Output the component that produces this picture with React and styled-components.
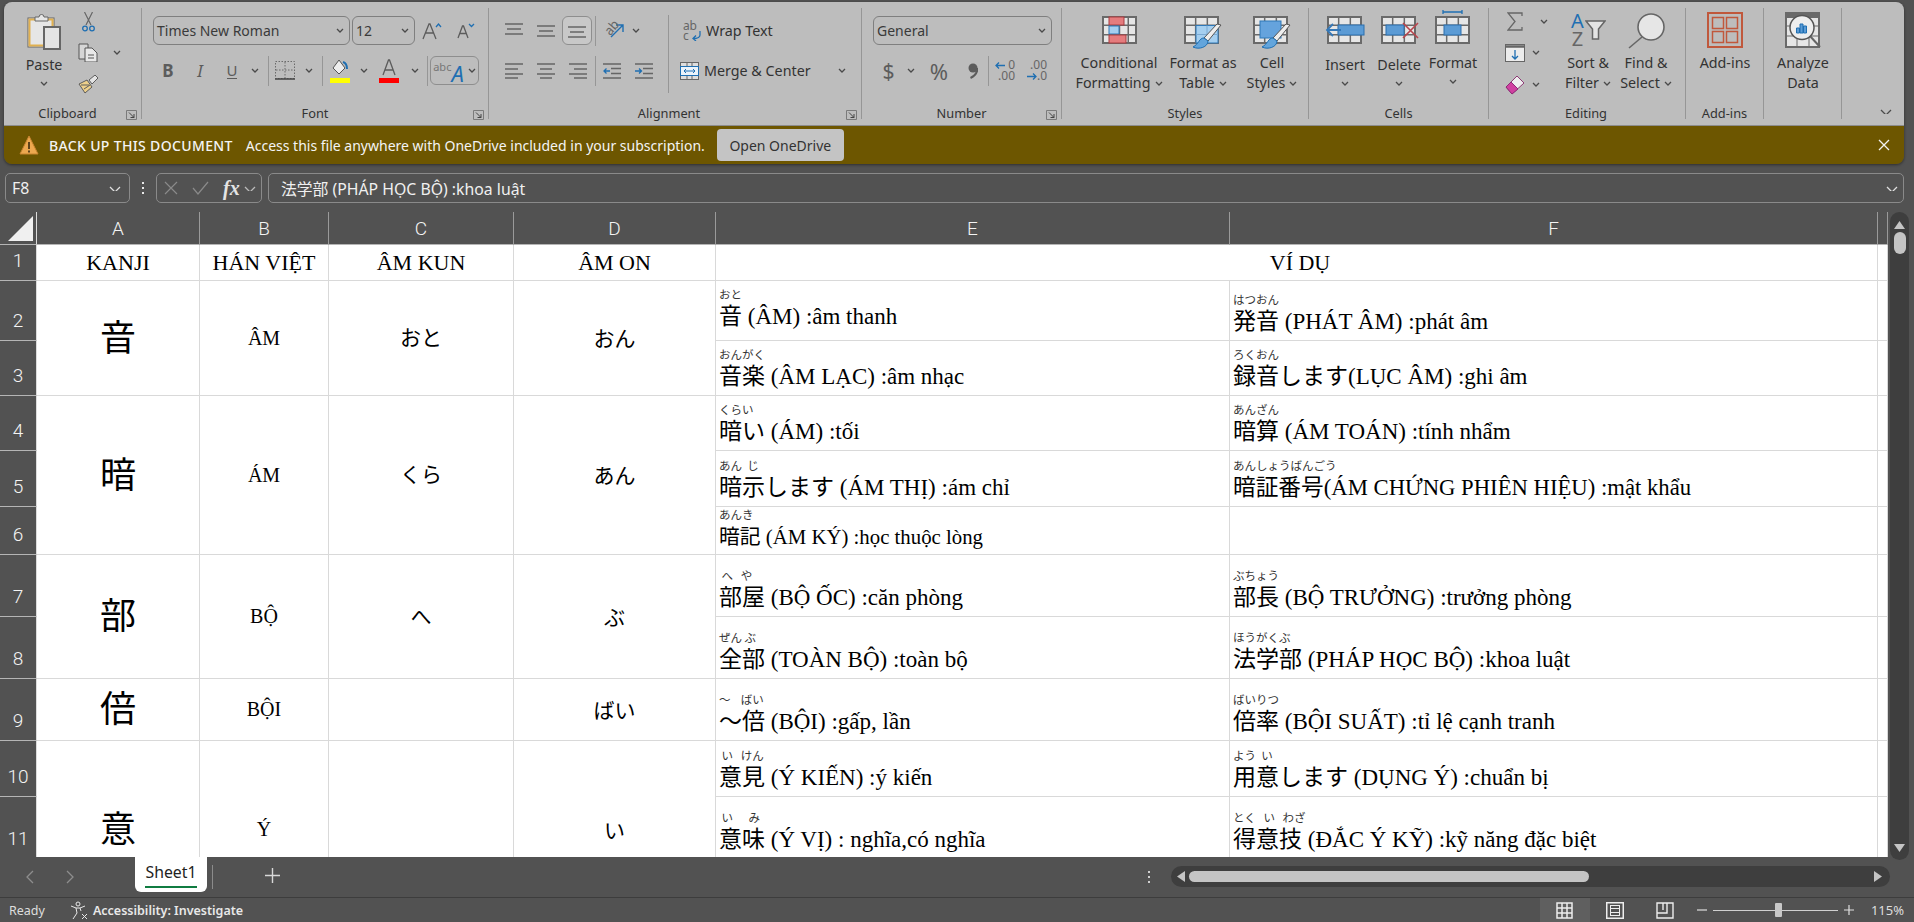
import React from "react";
import styled, { createGlobalStyle } from "styled-components";

const UI = `"Noto Sans", "Noto Sans CJK JP", sans-serif`;
const SERIF = `"Liberation Serif", "Noto Sans CJK JP", serif`;
const INK = "#333";

const GlobalStyle = createGlobalStyle`
  html, body { margin: 0; padding: 0; background: #525252; overflow: hidden; }
  * { box-sizing: border-box; }
`;

const Page = styled.div`
  width: 1914px;
  height: 922px;
  display: flex;
  flex-direction: column;
  background: #525252;
  font-family: ${UI};
  overflow: hidden;
`;

/* ---------- ribbon ---------- */
const RibbonWrap = styled.div`
  margin: 2px 10px 0 4px;
  height: 162px;
  border-radius: 8px;
  overflow: hidden;
  box-shadow: 0 1px 3px rgba(0, 0, 0, 0.45);
  flex: none;
`;
const Ribbon = styled.div`
  height: 124px;
  background: #bdbdbd;
  border-bottom: 1px solid #8c8c8c;
  padding-top: 6px;
  display: flex;
  position: relative;
  color: ${INK};
  font-size: 14.3px;
`;
const Group = styled.section`
  width: ${p => p.$w}px;
  height: 111px;
  flex: none;
  border-right: 1px solid #969696;
  display: flex;
  flex-direction: column;
  position: relative;
`;
const GroupBody = styled.div`
  flex: 1;
  display: flex;
  padding-left: ${p => p.$pad || 0}px;
  min-height: 0;
`;
const GroupLabel = styled.div`
  height: 16px;
  line-height: 16px;
  margin-bottom: -2px;
  text-align: center;
  font-size: 12.8px;
  padding-right: ${p => p.$shift || 0}px;
`;
const Launcher = styled.span`
  position: absolute;
  right: 4px;
  bottom: -1px;
  display: flex;
`;
const Stack = styled.div`
  display: flex;
  flex-direction: column;
  padding-top: 8px;
  gap: 11px;
  width: ${p => (p.$w ? `${p.$w}px` : "auto")};
`;
const ToolRow = styled.div`
  display: flex;
  align-items: center;
  height: 29px;
`;
const Tool = styled.span`
  width: ${p => p.$w}px;
  height: 29px;
  margin-left: ${p => p.$ml || 0}px;
  flex: none;
  display: flex;
  align-items: center;
  justify-content: center;
  font-size: ${p => p.$size || 14}px;
  font-weight: ${p => p.$weight || 400};
  font-style: ${p => (p.$italic ? "italic" : "normal")};
  color: #5c5c5c;
`;
const ToolBox = styled(Tool)`
  border: 1px solid #8e8e8e;
  border-radius: 6px;
  background: ${p => (p.$on ? "#c8c8c8" : "transparent")};
  gap: ${p => p.$gap || 0}px;
`;
const Divider = styled.i`
  width: 1px;
  height: 30px;
  margin-left: ${p => p.$l ?? 0}px;
  background: #969696;
  flex: none;
`;
const TallDivider = styled.i`
  width: 1px;
  height: 78px;
  margin-top: 7px;
  background: #969696;
  flex: none;
`;
const Combo = styled.div`
  width: ${p => p.$w}px;
  height: 29px;
  margin-left: ${p => p.$ml || 0}px;
  border: 1px solid #7f7f7f;
  border-radius: 6px;
  flex: none;
  display: flex;
  align-items: center;
  justify-content: space-between;
  padding: 0 5px 0 3px;
  font-size: 14px;
  color: #3a3a3a;
`;
const StyleAbc = styled.span`
  font-size: 11px;
  line-height: 11px;
  align-self: flex-start;
  margin-top: 4px;
  color: #777;
`;
const StyleA = styled.span`
  font-size: 22px;
  font-style: italic;
  line-height: 22px;
  color: #1f6fb2;
  margin: 4px 2px 0 -2px;
`;
const RotatedAb = styled.span`
  font-size: 13px;
  line-height: 13px;
  color: #666;
  display: block;
  transform: rotate(-50deg);
  margin: 0 -9px 6px 0;
`;
const WideAction = styled.div`
  height: 29px;
  display: flex;
  align-items: center;
  padding-left: ${p => p.$pad}px;
  gap: 5px;
  font-size: 14.3px;
`;
const WrapMark = styled.span`
  width: 18px;
  font-size: 12px;
  line-height: 9px;
  color: #666;
  display: grid;
  grid-template-columns: 8px 10px;
  align-items: center;
`;
const WrapAb = styled.span`
  grid-column: 1 / span 2;
  line-height: 10px;
  letter-spacing: -0.3px;
`;
const ChevSpacer = styled.span`
  margin-left: 22px;
  display: flex;
`;
const DecMark = styled.span`
  width: 20px;
  font-size: 12px;
  line-height: 10px;
  color: #666;
  display: flex;
  flex-direction: column;
`;
const DecLine = styled.span`
  height: 11px;
  display: flex;
  align-items: center;
  justify-content: space-between;
`;
const Big = styled.div`
  width: ${p => p.$w}px;
  flex: none;
  display: flex;
  flex-direction: column;
  align-items: center;
  line-height: 20px;
  text-align: center;
`;
const BigIcon = styled.div`
  height: 45px;
  padding-top: ${p => p.$top ?? 4}px;
  flex: none;
`;
const BigNudge = styled.div`
  height: ${p => p.$h}px;
  flex: none;
`;
const BigLine = styled.div`
  height: 20px;
  margin-top: ${p => (p.$tight ? -2 : 0)}px;
  display: flex;
  align-items: center;
  gap: 4px;
  white-space: nowrap;
`;
const SmallCol = styled.div`
  width: ${p => p.$w}px;
  flex: none;
  display: flex;
  flex-direction: column;
  gap: 3px;
`;
const SmallRow = styled.div`
  height: ${p => p.$h || 29}px;
  display: flex;
  align-items: center;
  gap: ${p => p.$gap || 0}px;
  padding-left: ${p => p.$pad || 0}px;
`;
const SortMark = styled.div`
  display: flex;
  align-items: center;
`;
const SortLetters = styled.div`
  width: 15px;
  display: flex;
  flex-direction: column;
  font-size: 20px;
  line-height: 18px;
  color: #666;
`;
const SortA = styled.span`
  color: #1f6fb2;
`;
const Collapse = styled.span`
  position: absolute;
  right: 12px;
  bottom: 11px;
  display: flex;
`;

/* ---------- banner ---------- */
const Banner = styled.div`
  height: 38px;
  background: #6d5600;
  color: #f4f4f4;
  display: flex;
  align-items: center;
  padding-left: 15px;
  font-size: 14px;
`;
const BannerTitle = styled.span`
  margin-left: 10px;
  font-weight: 500;
  letter-spacing: 0.35px;
  white-space: nowrap;
`;
const BannerText = styled.span`
  margin-left: 13px;
  white-space: nowrap;
`;
const BannerButton = styled.span`
  margin-left: 12px;
  width: 127px;
  height: 32px;
  border-radius: 4px;
  background: #c4c4c4;
  color: ${INK};
  display: flex;
  align-items: center;
  justify-content: center;
`;
const BannerClose = styled.span`
  margin-left: auto;
  margin-right: 14px;
  display: flex;
`;

/* ---------- formula bar ---------- */
const FormulaBar = styled.div`
  height: 30px;
  margin: 9px 10px 9px 5px;
  display: flex;
  align-items: center;
  flex: none;
  color: #f0f0f0;
  font-size: 15.8px;
`;
const NameBox = styled.div`
  width: 125px;
  height: 100%;
  border: 1px solid #8a8a8a;
  border-radius: 5px;
  display: flex;
  align-items: center;
  justify-content: space-between;
  padding: 0 8px 0 6px;
`;
const Dots = styled.span`
  width: 26px;
  display: flex;
  justify-content: center;
`;
const FxBox = styled.div`
  width: 106px;
  height: 100%;
  border: 1px solid #8a8a8a;
  border-radius: 5px;
  display: flex;
  align-items: center;
  gap: 14px;
  padding-left: 7px;
`;
const FxMark = styled.span`
  font-family: ${SERIF};
  font-style: italic;
  font-weight: 700;
  font-size: 20px;
  color: #e4e4e4;
  margin-right: -10px;
`;
const FormulaInput = styled.div`
  flex: 1;
  height: 100%;
  margin-left: 6px;
  border: 1px solid #8a8a8a;
  border-radius: 5px;
  display: flex;
  align-items: center;
  justify-content: space-between;
  padding: 0 5px 0 12px;
`;

/* ---------- sheet ---------- */
const SheetArea = styled.div`
  height: 645px;
  flex: none;
  display: flex;
`;
const Sheet = styled.div`
  width: 1888px;
  height: 645px;
  overflow: hidden;
  display: grid;
  grid-template-columns: 37px 163px 129px 185px 202px 514px 648px 10px;
  grid-template-rows: 33px 36px 60px 55px 55px 56px 48px 62px 62px 62px 56px 62px 60px;
  background: #fff;
`;
const Corner = styled.div`
  grid-row: 1;
  grid-column: 1;
  background: #525252;
  border-right: 1px solid #dcdcdc;
  border-bottom: 1px solid #b5b5b5;
  display: flex;
  align-items: flex-end;
  justify-content: flex-end;
  padding: 0 3px 3px 0;
`;
const HeadBase = styled.div`
  background: #525252;
  color: #f4f4f4;
  font-family: Roboto, "Noto Sans", sans-serif;
  font-size: 19px;
  font-weight: 300;
  display: flex;
  justify-content: center;
`;
const ColHead = styled(HeadBase)`
  grid-row: 1;
  grid-column: ${p => p.$col};
  border-right: 1px solid #9a9a9a;
  border-bottom: 1px solid #b5b5b5;
  align-items: center;
`;
const RowHead = styled(HeadBase)`
  grid-row: ${p => p.$row + 1};
  grid-column: 1;
  line-height: 24px;
  border-right: 1px solid #dcdcdc;
  border-bottom: 1px solid #b5b5b5;
  align-items: flex-end;
  padding-bottom: 7px;
`;
const Cell = styled.div`
  grid-row: ${p => p.$row + 1} / span ${p => p.$span || 1};
  grid-column: ${p => p.$col} / span ${p => p.$cols || 1};
  border-right: 1px solid #d9d9d9;
  border-bottom: 1px solid #d9d9d9;
  color: #000;
  font-family: ${SERIF};
  font-size: ${p => p.$size || 20}px;
  display: flex;
  align-items: center;
  justify-content: center;
  min-width: 0;
  padding-bottom: ${p => p.$lift || 0}px;
  padding-left: ${p => p.$indent || 0}px;
`;
const RubyCell = styled(Cell)`
  flex-direction: column;
  align-items: flex-start;
  justify-content: flex-end;
  padding: 0 0 ${p => p.$lift ?? 4}px 3px;
`;
const Furi = styled.div`
  font-family: "Noto Sans CJK JP", sans-serif;
  font-size: 11.5px;
  line-height: 14px;
  margin-bottom: 2px;
  color: #333;
  white-space: pre;
`;
const Phrase = styled.div`
  font-size: ${p => p.$size || 23}px;
  line-height: 28px;
  white-space: nowrap;
`;

/* ---------- scroll bars ---------- */
const VScroll = styled.div`
  width: 19px;
  height: 648px;
  margin-left: 2px;
  border-radius: 10px;
  background: #3e3e3e;
  position: relative;
  padding-top: 20px;
  display: flex;
  flex-direction: column;
  align-items: center;
  z-index: 1;
`;
const VThumb = styled.div`
  width: 12px;
  height: 22px;
  border-radius: 6px;
  background: #c4c4c4;
`;
const VArrow = styled.span`
  position: absolute;
  left: 4px;
  top: ${p => (p.$down ? "auto" : "7px")};
  bottom: ${p => (p.$down ? "7px" : "auto")};
  display: flex;
`;

/* ---------- tab bar ---------- */
const TabBar = styled.div`
  height: 41px;
  flex: none;
  border-bottom: 1px solid #3d3d3d;
  display: flex;
  align-items: flex-start;
`;
const TabNav = styled.div`
  width: 135px;
  height: 40px;
  display: flex;
  align-items: center;
  padding-left: 25px;
  gap: 30px;
`;
const SheetTab = styled.div`
  width: 72px;
  height: 35px;
  background: #fff;
  border-radius: 0 0 6px 6px;
  color: #222;
  font-size: 15.8px;
  display: flex;
  flex-direction: column;
  align-items: center;
  padding-top: 4px;
`;
const TabMark = styled.i`
  width: 52px;
  height: 2px;
  margin-top: 3px;
  background: #107c41;
`;
const TabSep = styled.i`
  width: 1px;
  height: 24px;
  margin: 8px 0 0 5px;
  background: #8b8b8b;
`;
const AddTab = styled.span`
  margin: 11px 0 0 52px;
  display: flex;
`;
const HScrollZone = styled.div`
  margin: 9px 0 0 auto;
  width: 767px;
  display: flex;
  align-items: center;
  padding-right: 24px;
`;
const DotsDark = styled.span`
  width: 24px;
  display: flex;
`;
const HTrack = styled.div`
  flex: 1;
  height: 21px;
  border-radius: 11px;
  background: #3e3e3e;
  position: relative;
  padding: 5px 0 0 18px;
`;
const HThumb = styled.div`
  width: 400px;
  height: 11px;
  border-radius: 6px;
  background: #c4c4c4;
`;
const HArrow = styled.span`
  position: absolute;
  top: 5px;
  ${p => (p.$left ? "left: 5px;" : "right: 6px;")}
  display: flex;
`;

/* ---------- status bar ---------- */
const StatusBar = styled.div`
  flex: 1;
  display: flex;
  align-items: center;
  color: #dedede;
  font-size: 12.5px;
  padding: 0 10px 0 9px;
`;
const AccessHint = styled.span`
  margin-left: 25px;
  display: flex;
  align-items: center;
  gap: 4px;
  font-weight: 600;
  color: #e8e8e8;
`;
const ViewGroup = styled.span`
  margin: 0 7px 0 auto;
  display: flex;
`;
const ViewButton = styled.span`
  width: 50px;
  height: 24px;
  display: flex;
  align-items: center;
  justify-content: center;
  background: ${p => (p.$on ? "#5f5f5f" : "transparent")};
`;
const ZoomTrack = styled.span`
  width: 125px;
  height: 1px;
  margin: 0 6px;
  background: #d0d0d0;
  position: relative;
`;
const ZoomThumb = styled.i`
  position: absolute;
  left: 62px;
  top: -7px;
  width: 7px;
  height: 14px;
  background: #c8c8c8;
  border-radius: 1px;
`;
const ZoomValue = styled.span`
  margin-left: 17px;
  font-size: 13px;
`;

/* ---------- icons ---------- */
const Svg = ({ w, h, children }) => (
  <svg width={w} height={h} viewBox={`0 0 ${w} ${h}`} fill="none" style={{ display: "block", flex: "none" }}>
    {children}
  </svg>
);
const GREY = "#6a6a6a";
const BLUE = "#1f6fb2";
const CELL = "#e6e6e6";
const ROW = "#5b9bd5";
const ROW_EDGE = "#2b6fae";

const Chev = ({ color = "#4a4a4a", w = 8 }) => (
  <Svg w={w} h={5}>
    <path d={`M1 1l${w / 2 - 1} ${w / 2 - 1}l${w / 2 - 1} -${w / 2 - 1}`} stroke={color} strokeWidth="1.3" />
  </Svg>
);
const LauncherIcon = () => (
  <Svg w={11} h={10}>
    <path d="M.5 9.5v-9h10M.5 9.5h10v-9" stroke="#7a7a7a" />
    <path d="M3 2.5l5 5M8 4v3.5H4.5" stroke="#444" />
  </Svg>
);
const PasteIcon = () => (
  <Svg w={34} h={37}>
    <rect x="1" y="5" width="26" height="29" fill={CELL} stroke="#666" />
    <rect x="2.500" y="6.500" width="23" height="26" stroke="#e0b050" strokeWidth="2" />
    <path d="M8 8V4h4a2.500 2.500 0 0 1 5 0h4v4z" fill={CELL} stroke="#666" />
    <rect x="17" y="14" width="16" height="22" fill="#e4e4e4" stroke="#666" strokeWidth="2" />
  </Svg>
);
const CutIcon = () => (
  <Svg w={13} h={20}>
    <path d="M2.500 0l6.500 13M10.500 0L4 13" stroke="#666" strokeWidth="1.200" />
    <circle cx="3" cy="16.500" r="2.300" stroke={BLUE} strokeWidth="1.300" />
    <circle cx="10" cy="16.500" r="2.300" stroke={BLUE} strokeWidth="1.300" />
  </Svg>
);
const CopyIcon = () => (
  <Svg w={20} h={19}>
    <path d="M1 1h9v15H1z" fill="#d6d6d6" stroke="#555" />
    <path d="M7 5h7l5 5v9H7z" fill="#e8e8e8" stroke="#555" />
    <path d="M10 12h6M10 15h6" stroke="#555" />
  </Svg>
);
const PainterIcon = () => (
  <Svg w={20} h={19}>
    <path d="M1 9l8-4 5 7-7 6z" fill="#eed08a" stroke="#5c5c5c" />
    <path d="M3 10l8 0M6 14l6-4" stroke="#5c5c5c" />
    <path d="M11 5l6-5 3 3-6 6z" fill="#e4e4e4" stroke="#5c5c5c" />
  </Svg>
);
const GrowIcon = ({ up }) =>
  up ? (
    <Svg w={20} h={18}>
      <path d="M1 17L7 2h1l6 15M3.500 11h8" stroke="#5c5c5c" strokeWidth="1.300" />
      <path d="M14 5l2.500-3L19 5" stroke={BLUE} strokeWidth="1.300" />
    </Svg>
  ) : (
    <Svg w={18} h={16}>
      <path d="M1 15L5.500 3h1L11 15M2.800 10.500h6.400" stroke="#5c5c5c" strokeWidth="1.300" />
      <path d="M12 1l2.500 2.500L17 1" stroke={BLUE} strokeWidth="1.300" />
    </Svg>
  );
const BoldU = styled.span`
  border-bottom: 1px solid #5c5c5c;
  line-height: 16px;
`;
const BordersIcon = () => (
  <Svg w={20} h={19}>
    <rect x=".5" y=".5" width="19" height="17" stroke="#6a6a6a" strokeDasharray="1.500 1.500" />
    <path d="M10 1v17M1 9h18" stroke="#6a6a6a" strokeDasharray="1.500 1.500" />
    <path d="M0 18h20" stroke="#444" strokeWidth="1.500" />
  </Svg>
);
const FillIcon = () => (
  <Svg w={20} h={24}>
    <path d="M9 1L3 9l6 6 6-6z" fill="#eee" stroke="#555" />
    <path d="M13 3c3 1 4 3 4 7" stroke={BLUE} strokeWidth="2" />
    <rect y="19" width="20" height="5" fill="#ffff00" />
  </Svg>
);
const FontColorIcon = () => (
  <Svg w={20} h={24}>
    <path d="M4 16L9.500 1h1L16 16M6 11h8" stroke="#5c5c5c" strokeWidth="1.300" />
    <rect y="19" width="20" height="5" fill="#ff0000" />
  </Svg>
);
const Bars = ({ rows }) => (
  <Svg w={18} h={16}>
    {rows.map(([y, x, l], i) => (
      <path key={i} d={`M${x} ${y}h${l}`} stroke="#666" strokeWidth="1.400" />
    ))}
  </Svg>
);
const OrientArrow = () => (
  <Svg w={14} h={14}>
    <path d="M1 13L13 1M6 1h7v7" stroke={BLUE} strokeWidth="1.400" />
  </Svg>
);
const IndentIcon = ({ more }) => (
  <Svg w={18} h={16}>
    <path d="M0 1h18M8 5.500h10M8 10.500h10M0 15h18" stroke="#666" strokeWidth="1.300" />
    <path d={more ? "M0 8h6M4 5.500L6.500 8 4 10.500" : "M7 8H1M3.500 5.500L1 8l2.500 2.500"} stroke={BLUE} strokeWidth="1.300" />
  </Svg>
);
const ReturnArrow = () => (
  <Svg w={10} h={10}>
    <path d="M9 0v4c0 2-2 3.500-7 3.500M5 4.500L2 7.500l3 2.500" stroke={BLUE} strokeWidth="1.300" />
  </Svg>
);
const MergeIcon = () => (
  <Svg w={19} h={18}>
    <rect x=".5" y=".5" width="18" height="17" fill="#dedede" stroke="#666" />
    <path d="M7 0v5M12 0v5M7 13v5M12 13v5" stroke="#666" />
    <rect x=".5" y="4.500" width="18" height="9" fill="#eaf3fb" stroke={BLUE} />
    <path d="M4 9h11M6 7L4 9l2 2M13 7l2 2-2 2" stroke={BLUE} />
  </Svg>
);
const CommaIcon = () => (
  <Svg w={11} h={16}>
    <circle cx="6" cy="5" r="4.500" fill="#5c5c5c" />
    <path d="M10.500 5c0 5-3 8-7 10" stroke="#5c5c5c" strokeWidth="2" />
  </Svg>
);
const DecArrow = ({ right }) => (
  <Svg w={10} h={9}>
    <path d={right ? "M0 4.500h9M6 1.500l3 3-3 3" : "M10 4.500H1M4 1.500l-3 3 3 3"} stroke={BLUE} strokeWidth="1.300" />
  </Svg>
);
const Table = ({ x = 0, y = 0, w = 35, h = 28, cols = 3, rows = 3 }) => {
  const lines = [];
  for (let i = 1; i < cols; i++) lines.push(`M${x + (w * i) / cols} ${y}v${h}`);
  for (let i = 1; i < rows; i++) lines.push(`M${x} ${y + (h * i) / rows}h${w}`);
  return (
    <>
      <rect x={x + 1} y={y + 1} width={w - 2} height={h - 2} fill={CELL} stroke={GREY} strokeWidth="2" />
      <path d={lines.join("")} stroke={GREY} strokeWidth="1.500" />
    </>
  );
};
const CondIcon = () => (
  <Svg w={35} h={28}>
    <Table cols={4} />
    <rect x="7" y="1" width="15" height="8" fill="#e57c7e" stroke="#a83c40" />
    <rect x="7" y="10" width="10" height="8" fill="#a5cff0" stroke="#2f78b8" />
    <rect x="7" y="19" width="17" height="8" fill="#e57c7e" stroke="#a83c40" />
  </Svg>
);
const Brush = () => (
  <>
    <path d="M37 9l-4-1-13 14 4 3z" fill="#eee" stroke="#555" />
    <path d="M20 22c-5 0-5 6-11 9 6 3 15 0 15-6z" fill="#63a5dc" stroke={BLUE} />
  </>
);
const TableStyleIcon = () => (
  <Svg w={38} h={34}>
    <Table />
    <rect x="12" y="9.500" width="22" height="17.500" fill="#a5cff0" stroke="#2f78b8" />
    <path d="M23 9.500V27M12 18.500h22" stroke="#7aa9d3" />
    <Brush />
  </Svg>
);
const CellStyleIcon = () => (
  <Svg w={38} h={34}>
    <Table />
    <rect x="7" y="5" width="21" height="17" fill="#65a3dd" stroke="#2f78b8" />
    <Brush />
  </Svg>
);
const InsertIcon = () => (
  <Svg w={40} h={28}>
    <Table x={2} />
    <rect x="13" y="9" width="26" height="10" fill={ROW} stroke={ROW_EDGE} />
    <path d="M16 14H2M8 8l-6 6 6 6" stroke="#3478b8" strokeWidth="1.800" />
  </Svg>
);
const DeleteIcon = () => (
  <Svg w={40} h={28}>
    <Table x={2} />
    <rect x="7" y="9" width="18" height="10" fill={ROW} stroke={ROW_EDGE} />
    <path d="M24 7l15 15M39 7L24 22" stroke="#b8444c" strokeWidth="1.600" />
  </Svg>
);
const FormatIcon = () => (
  <Svg w={36} h={34}>
    <path d="M8 2h19M8 0v4M27 0v4" stroke={BLUE} strokeWidth="1.300" />
    <Table y={6} />
    <rect x="9" y="15" width="17" height="10" fill={ROW} stroke={ROW_EDGE} />
  </Svg>
);
const SigmaIcon = () => (
  <Svg w={16} h={19}>
    <path d="M15 4V1H1l7 8.500L1 18h14v-3" stroke="#666" strokeWidth="1.300" />
  </Svg>
);
const FillDownIcon = () => (
  <Svg w={20} h={18}>
    <rect x=".5" y=".5" width="19" height="17" fill="#ececec" stroke="#666" />
    <path d="M0 2.500h20" stroke="#666" strokeWidth="2.500" />
    <path d="M10 6v9M7 12l3 3 3-3" stroke={BLUE} strokeWidth="1.300" />
  </Svg>
);
const EraserIcon = () => (
  <Svg w={20} h={20}>
    <path d="M7 19L1 12 12 1l7 7z" fill="#eee" stroke="#8e3a76" />
    <path d="M7 19L1 12l5-5 7 7z" fill="#d040a0" stroke="#8e2a76" />
  </Svg>
);
const FunnelIcon = () => (
  <Svg w={21} h={20}>
    <path d="M1 1h19l-6.500 8v10h-6V9z" fill="#e4e4e4" stroke="#666" strokeWidth="1.500" />
  </Svg>
);
const FindIcon = () => (
  <Svg w={37} h={36}>
    <circle cx="23" cy="14" r="13" fill="#e6e6e6" stroke="#666" strokeWidth="1.600" />
    <path d="M14 24L1 35" stroke="#666" strokeWidth="1.600" />
  </Svg>
);
const AddInsIcon = () => (
  <Svg w={36} h={36}>
    <rect x="1" y="1" width="34" height="34" stroke="#c0583c" strokeWidth="2" />
    <path d="M5.500 5.500h11v11h-11zM19.500 5.500h11v11h-11zM5.500 19.500h11v11h-11zM19.500 19.500h11v11h-11z" stroke="#c0583c" strokeWidth="1.500" />
  </Svg>
);
const AnalyzeIcon = () => (
  <Svg w={36} h={36}>
    <rect x="1" y="1" width="33" height="34" fill={CELL} stroke={GREY} strokeWidth="2" />
    <path d="M1 3.500h33" stroke={GREY} strokeWidth="5" />
    <path d="M1 14h33M1 24h33M12 6v29M24 6v29" stroke={GREY} />
    <path d="M25 24l10 11" stroke="#666" strokeWidth="2" />
    <circle cx="17" cy="15.500" r="12" fill="#eee" stroke="#555" strokeWidth="1.500" />
    <path d="M11.500 21v-5h3v5zM15 21v-9h3v9zM18.500 21v-7h3v7z" fill={ROW} stroke={BLUE} />
  </Svg>
);
const WarnIcon = () => (
  <Svg w={20} h={20}>
    <path d="M10 1L19 19H1z" fill="#eda84f" stroke="#c88530" />
    <path d="M10 7v7M10 15.500v2" stroke="#3a2a10" strokeWidth="1.600" />
  </Svg>
);
const Cross = ({ s = 11, color = "#f2f2f2", sw = 1.3 }) => (
  <Svg w={s} h={s}>
    <path d={`M1 1L${s - 1} ${s - 1}M${s - 1} 1L1 ${s - 1}`} stroke={color} strokeWidth={sw} />
  </Svg>
);
const Tick = () => (
  <Svg w={17} h={14}>
    <path d="M1 7l5 6L16 1" stroke="#8a8a8a" strokeWidth="1.200" />
  </Svg>
);
const VDots = ({ color = "#e8e8e8" }) => (
  <Svg w={4} h={14}>
    <rect x="1" y="1" width="2" height="2" fill={color} />
    <rect x="1" y="6" width="2" height="2" fill={color} />
    <rect x="1" y="11" width="2" height="2" fill={color} />
  </Svg>
);
const Tri = ({ dir }) => {
  const d = { up: "M0 10L5.500 2 11 10z", down: "M0 2L5.500 10 11 2z", right: "M1 0L9 5.500 1 11z", left: "M9 0L1 5.500 9 11z" }[dir];
  return (
    <Svg w={11} h={11}>
      <path d={d} fill="#c4c4c4" />
    </Svg>
  );
};
const NavArrow = ({ right }) => (
  <Svg w={10} h={14}>
    <path d={right ? "M2 1l6 6-6 6" : "M8 1L2 7l6 6"} stroke="#8d8d8d" strokeWidth="1.300" />
  </Svg>
);
const Plus = () => (
  <Svg w={15} h={15}>
    <path d="M7.500 0v15M0 7.500h15" stroke="#d8d8d8" strokeWidth="1.400" />
  </Svg>
);
const A11yIcon = () => (
  <Svg w={19} h={19}>
    <circle cx="8" cy="3" r="2" stroke="#e8e8e8" />
    <path d="M1 5l5 2h4l5-2M6 7l1 5-4 6M10 7l1 3M12 13l5 5M17 13l-5 5" stroke="#e8e8e8" />
  </Svg>
);
const GridView = () => (
  <Svg w={17} h={17}>
    <path d="M1 1h15v15H1zM6 1v15M11 1v15M1 6h15M1 11h15" stroke="#ededed" strokeWidth="1.500" />
  </Svg>
);
const PageView = () => (
  <Svg w={18} h={17}>
    <rect x=".750" y=".750" width="16.500" height="15.500" stroke="#ededed" strokeWidth="1.500" />
    <rect x="4.500" y="3.500" width="9" height="10" stroke="#ededed" />
    <path d="M4.500 6.500h9M4.500 10.500h9" stroke="#ededed" />
  </Svg>
);
const BreakView = () => (
  <Svg w={18} h={17}>
    <path d="M1 1h16v15H1zM1 11h10V1M7 1v7" stroke="#ededed" strokeWidth="1.400" />
  </Svg>
);

/* ---------- data ---------- */
const colLetters = ["A", "B", "C", "D", "E", "F"];
const rowHeads = [1, 2, 3, 4, 5, 6, 7, 8, 9, 10, 11];
const mergedRows = [
  { row: 2, span: 2, kanji: "音", sino: "ÂM", kun: "おと", on: "おん" },
  { row: 4, span: 3, kanji: "暗", sino: "ÁM", kun: "くら", on: "あん" },
  { row: 7, span: 2, kanji: "部", sino: "BỘ", kun: "へ", on: "ぶ" },
  { row: 9, span: 1, kanji: "倍", sino: "BỘI", kun: "", on: "ばい" },
  { row: 10, span: 3, kanji: "意", sino: "Ý", kun: "", on: "い" },
];
const examples = [
  [2, ["おと", "音 (ÂM) :âm thanh", 9], ["はつおん", "発音 (PHÁT ÂM) :phát âm"]],
  [3, ["おんがく", "音楽 (ÂM LẠC) :âm nhạc"], ["ろくおん", "録音します(LỤC ÂM) :ghi âm"]],
  [4, ["くらい", "暗い (ÁM) :tối"], ["あんざん", "暗算 (ÁM TOÁN) :tính nhẩm"]],
  [5, ["あん  じ", "暗示します (ÁM THỊ) :ám chỉ"], ["あんしょうばんごう", "暗証番号(ÁM CHỨNG PHIÊN HIỆU) :mật khẩu", 4, 22.7]],
  [6, ["あんき", "暗記 (ÁM KÝ) :học thuộc lòng", 3, 20.8], null],
  [7, [" へ   や", "部屋 (BỘ ỐC) :căn phòng"], ["ぶちょう", "部長 (BỘ TRƯỞNG) :trưởng phòng"]],
  [8, ["ぜん ぶ", "全部 (TOÀN BỘ) :toàn bộ"], ["ほうがくぶ", "法学部 (PHÁP HỌC BỘ) :khoa luật"]],
  [9, ["～    ばい", "～倍 (BỘI) :gấp, lần"], ["ばいりつ", "倍率 (BỘI SUẤT) :tỉ lệ cạnh tranh"]],
  [10, [" い   けん", "意見 (Ý KIẾN) :ý kiến"], ["よう  い", "用意します (DỤNG Ý) :chuẩn bị"]],
  [11, [" い      み", "意味 (Ý VỊ) : nghĩa,có nghĩa"], ["とく   い   わざ", "得意技 (ĐẮC Ý KỸ) :kỹ năng đặc biệt"]],
];

const Example = ({ row, col, item }) => {
  if (!item) return <Cell $row={row} $col={col} />;
  const [furi, text, lift, size] = item;
  return (
    <RubyCell $row={row} $col={col} $lift={lift}>
      <Furi>{furi}</Furi>
      <Phrase $size={size}>{text}</Phrase>
    </RubyCell>
  );
};

const BigButton = ({ w, icon, lines, top, nudge }) => (
  <Big $w={w}>
    <BigIcon $top={top}>{icon}</BigIcon>
    {nudge ? <BigNudge $h={nudge} /> : null}
    {lines.map((line, i) => (
      <BigLine key={i} $tight={!line.text}>
        {line.text}
        {line.chev ? <Chev /> : null}
      </BigLine>
    ))}
  </Big>
);

const App = () => (
  <Page>
    <GlobalStyle />
    <RibbonWrap>
      <Ribbon>
        <Group $w={138}>
          <GroupBody $pad={6}>
            <BigButton w={68} top={5} icon={<PasteIcon />} nudge={2} lines={[{ text: "Paste" }, { text: "", chev: true }]} />
            <SmallCol $w={60}>
              <SmallRow $pad={4} $h={27}><CutIcon /></SmallRow>
              <SmallRow $gap={15}><CopyIcon /><Chev /></SmallRow>
              <SmallRow><PainterIcon /></SmallRow>
            </SmallCol>
          </GroupBody>
          <GroupLabel $shift={10}>Clipboard</GroupLabel>
          <Launcher><LauncherIcon /></Launcher>
        </Group>

        <Group $w={347}>
          <GroupBody $pad={10}>
            <Stack>
              <ToolRow>
                <Combo $w={197} $ml={1}>Times New Roman<Chev /></Combo>
                <Combo $w={63} $ml={2}>12<Chev /></Combo>
                <Tool $w={34}><GrowIcon up /></Tool>
                <Tool $w={34}><GrowIcon /></Tool>
              </ToolRow>
              <ToolRow>
                <Tool $w={32} $size={17} $weight={700}>B</Tool>
                <Tool $w={32} $size={17} $italic>I</Tool>
                <Tool $w={32} $size={15}><BoldU>U</BoldU></Tool>
                <Tool $w={14}><Chev /></Tool>
                <Divider $l={6} />
                <Tool $w={32}><BordersIcon /></Tool>
                <Tool $w={16}><Chev /></Tool>
                <Divider $l={5} />
                <Tool $w={34}><FillIcon /></Tool>
                <Tool $w={13}><Chev /></Tool>
                <Tool $w={38}><FontColorIcon /></Tool>
                <Tool $w={13}><Chev /></Tool>
                <Divider $l={6} />
                <ToolBox $w={49} $ml={2} $gap={2}>
                  <StyleAbc>abc</StyleAbc>
                  <StyleA>A</StyleA>
                  <Chev />
                </ToolBox>
              </ToolRow>
            </Stack>
          </GroupBody>
          <GroupLabel>Font</GroupLabel>
          <Launcher><LauncherIcon /></Launcher>
        </Group>

        <Group $w={373}>
          <GroupBody $pad={9}>
            <Stack $w={170}>
              <ToolRow>
                <Tool $w={32}><Bars rows={[[1, 0, 18], [6, 2, 14], [11, 0, 18]]} /></Tool>
                <Tool $w={32}><Bars rows={[[3, 0, 18], [8, 2, 14], [13, 0, 18]]} /></Tool>
                <ToolBox $w={30} $on><Bars rows={[[4, 0, 18], [9, 2, 14], [14, 0, 18]]} /></ToolBox>
                <Divider $l={3} />
                <Tool $w={32} $ml={2}><RotatedAb>ab</RotatedAb><OrientArrow /></Tool>
                <Tool $w={12}><Chev /></Tool>
              </ToolRow>
              <ToolRow>
                <Tool $w={32}><Bars rows={[[1, 0, 18], [6, 0, 13], [11, 0, 18], [15, 0, 13]]} /></Tool>
                <Tool $w={32}><Bars rows={[[1, 0, 18], [6, 3, 12], [11, 0, 18], [15, 3, 12]]} /></Tool>
                <Tool $w={32}><Bars rows={[[1, 0, 18], [6, 5, 13], [11, 0, 18], [15, 5, 13]]} /></Tool>
                <Divider $l={1} />
                <Tool $w={32}><IndentIcon /></Tool>
                <Tool $w={32}><IndentIcon more /></Tool>
              </ToolRow>
            </Stack>
            <TallDivider />
            <Stack>
              <WideAction $pad={14}>
                <WrapMark>
                  <WrapAb>ab</WrapAb>
                  <span>c</span>
                  <ReturnArrow />
                </WrapMark>
                Wrap Text
              </WideAction>
              <WideAction $pad={11}>
                <MergeIcon />Merge &amp; Center
                <ChevSpacer><Chev /></ChevSpacer>
              </WideAction>
            </Stack>
          </GroupBody>
          <GroupLabel $shift={12}>Alignment</GroupLabel>
          <Launcher><LauncherIcon /></Launcher>
        </Group>

        <Group $w={200}>
          <GroupBody $pad={11}>
            <Stack>
              <ToolRow>
                <Combo $w={179}>General<Chev /></Combo>
              </ToolRow>
              <ToolRow>
                <Tool $w={31} $size={21}>$</Tool>
                <Tool $w={14}><Chev /></Tool>
                <Tool $w={42} $size={22}>%</Tool>
                <Tool $w={24}><CommaIcon /></Tool>
                <Divider $l={4} />
                <Tool $w={32}>
                  <DecMark>
                    <DecLine><DecArrow /><span>0</span></DecLine>
                    <DecLine><span /><span>.00</span></DecLine>
                  </DecMark>
                </Tool>
                <Tool $w={32}>
                  <DecMark>
                    <DecLine><span /><span>.00</span></DecLine>
                    <DecLine><DecArrow right /><span>.0</span></DecLine>
                  </DecMark>
                </Tool>
              </ToolRow>
            </Stack>
          </GroupBody>
          <GroupLabel>Number</GroupLabel>
          <Launcher><LauncherIcon /></Launcher>
        </Group>

        <Group $w={247}>
          <GroupBody $pad={15}>
            <BigButton w={84} top={8} icon={<CondIcon />} lines={[{ text: "Conditional" }, { text: "Formatting", chev: true }]} />
            <BigButton w={84} top={8} icon={<TableStyleIcon />} lines={[{ text: "Format as" }, { text: "Table", chev: true }]} />
            <BigButton w={54} top={8} icon={<CellStyleIcon />} lines={[{ text: "Cell" }, { text: "Styles", chev: true }]} />
          </GroupBody>
          <GroupLabel>Styles</GroupLabel>
        </Group>

        <Group $w={180}>
          <GroupBody $pad={9}>
            <BigButton w={54} top={8} icon={<InsertIcon />} nudge={2} lines={[{ text: "Insert" }, { text: "", chev: true }]} />
            <BigButton w={54} top={8} icon={<DeleteIcon />} nudge={2} lines={[{ text: "Delete" }, { text: "", chev: true }]} />
            <BigButton w={54} top={2} icon={<FormatIcon />} lines={[{ text: "Format" }, { text: "", chev: true }]} />
          </GroupBody>
          <GroupLabel>Cells</GroupLabel>
        </Group>

        <Group $w={197}>
          <GroupBody $pad={12}>
            <SmallCol $w={58}>
              <SmallRow $pad={6} $gap={17} $h={27}><SigmaIcon /><Chev /></SmallRow>
              <SmallRow $pad={4} $gap={7}><FillDownIcon /><Chev /></SmallRow>
              <SmallRow $pad={4} $gap={7}><EraserIcon /><Chev /></SmallRow>
            </SmallCol>
            <BigButton
              w={58}
              top={4}
              icon={
                <SortMark>
                  <SortLetters><SortA>A</SortA><span>Z</span></SortLetters>
                  <FunnelIcon />
                </SortMark>
              }
              lines={[{ text: "Sort &" }, { text: "Filter", chev: true }]}
            />
            <BigButton w={58} top={5} icon={<FindIcon />} lines={[{ text: "Find &" }, { text: "Select", chev: true }]} />
          </GroupBody>
          <GroupLabel $shift={2}>Editing</GroupLabel>
        </Group>

        <Group $w={78}>
          <GroupBody>
            <BigButton w={78} top={4} icon={<AddInsIcon />} lines={[{ text: "Add-ins" }]} />
          </GroupBody>
          <GroupLabel>Add-ins</GroupLabel>
        </Group>

        <Group $w={78}>
          <GroupBody>
            <BigButton w={78} top={4} icon={<AnalyzeIcon />} lines={[{ text: "Analyze" }, { text: "Data" }]} />
          </GroupBody>
        </Group>
        <Collapse><Chev w={12} /></Collapse>
      </Ribbon>
      <Banner>
        <WarnIcon />
        <BannerTitle>BACK UP THIS DOCUMENT</BannerTitle>
        <BannerText>Access this file anywhere with OneDrive included in your subscription.</BannerText>
        <BannerButton>Open OneDrive</BannerButton>
        <BannerClose><Cross s={12} /></BannerClose>
      </Banner>
    </RibbonWrap>

    <FormulaBar>
      <NameBox>F8<Chev color="#e0e0e0" w={12} /></NameBox>
      <Dots><VDots /></Dots>
      <FxBox>
        <Cross s={14} color="#8a8a8a" sw={1.2} />
        <Tick />
        <FxMark>fx</FxMark>
        <Chev color="#bbb" w={12} />
      </FxBox>
      <FormulaInput>
        法学部 (PHÁP HỌC BỘ) :khoa luật
        <Chev color="#e0e0e0" w={12} />
      </FormulaInput>
    </FormulaBar>

    <SheetArea>
      <Sheet>
        <Corner>
          <Svg w={25} h={25}>
            <path d="M25 0v25H0z" fill="#f0f0f0" />
          </Svg>
        </Corner>
        {colLetters.map((c, i) => (
          <ColHead key={c} $col={i + 2}>{c}</ColHead>
        ))}
        <ColHead $col={8} />
        {rowHeads.map(r => (
          <RowHead key={r} $row={r}>{r}</RowHead>
        ))}
        <RowHead $row={12} />

        <Cell $row={1} $col={2} $size={22}>KANJI</Cell>
        <Cell $row={1} $col={3} $size={22}>HÁN VIỆT</Cell>
        <Cell $row={1} $col={4} $size={22}>ÂM KUN</Cell>
        <Cell $row={1} $col={5} $size={22}>ÂM ON</Cell>
        <Cell $row={1} $col={6} $cols={2} $size={22} $indent={7}>VÍ DỤ</Cell>
        <Cell $row={1} $col={8} />

        {mergedRows.map(m => (
          <React.Fragment key={m.row}>
            <Cell $row={m.row} $col={2} $span={m.span} $size={36} $lift={7}>{m.kanji}</Cell>
            <Cell $row={m.row} $col={3} $span={m.span}>{m.sino}</Cell>
            <Cell $row={m.row} $col={4} $span={m.span} $size={21} $lift={4}>{m.kun}</Cell>
            <Cell $row={m.row} $col={5} $span={m.span} $size={21} $lift={2}>{m.on}</Cell>
          </React.Fragment>
        ))}
        {examples.map(([row, e, f]) => (
          <React.Fragment key={row}>
            <Example row={row} col={6} item={e} />
            <Example row={row} col={7} item={f} />
            <Cell $row={row} $col={8} />
          </React.Fragment>
        ))}
        <Cell $row={12} $col={6} />
        <Cell $row={12} $col={7} />
        <Cell $row={12} $col={8} />
      </Sheet>
      <VScroll>
        <VArrow><Tri dir="up" /></VArrow>
        <VThumb />
        <VArrow $down><Tri dir="down" /></VArrow>
      </VScroll>
    </SheetArea>

    <TabBar>
      <TabNav>
        <NavArrow />
        <NavArrow right />
      </TabNav>
      <SheetTab>
        Sheet1
        <TabMark />
      </SheetTab>
      <TabSep />
      <AddTab><Plus /></AddTab>
      <HScrollZone>
        <DotsDark><VDots color="#d0d0d0" /></DotsDark>
        <HTrack>
          <HArrow $left><Tri dir="left" /></HArrow>
          <HThumb />
          <HArrow><Tri dir="right" /></HArrow>
        </HTrack>
      </HScrollZone>
    </TabBar>

    <StatusBar>
      Ready
      <AccessHint><A11yIcon />Accessibility: Investigate</AccessHint>
      <ViewGroup>
        <ViewButton $on><GridView /></ViewButton>
        <ViewButton><PageView /></ViewButton>
        <ViewButton><BreakView /></ViewButton>
      </ViewGroup>
      <Svg w={10} h={2}><path d="M0 1h10" stroke="#e0e0e0" strokeWidth="1.200" /></Svg>
      <ZoomTrack><ZoomThumb /></ZoomTrack>
      <Svg w={10} h={10}><path d="M5 0v10M0 5h10" stroke="#e0e0e0" strokeWidth="1.200" /></Svg>
      <ZoomValue>115%</ZoomValue>
    </StatusBar>
  </Page>
);

export default App;
